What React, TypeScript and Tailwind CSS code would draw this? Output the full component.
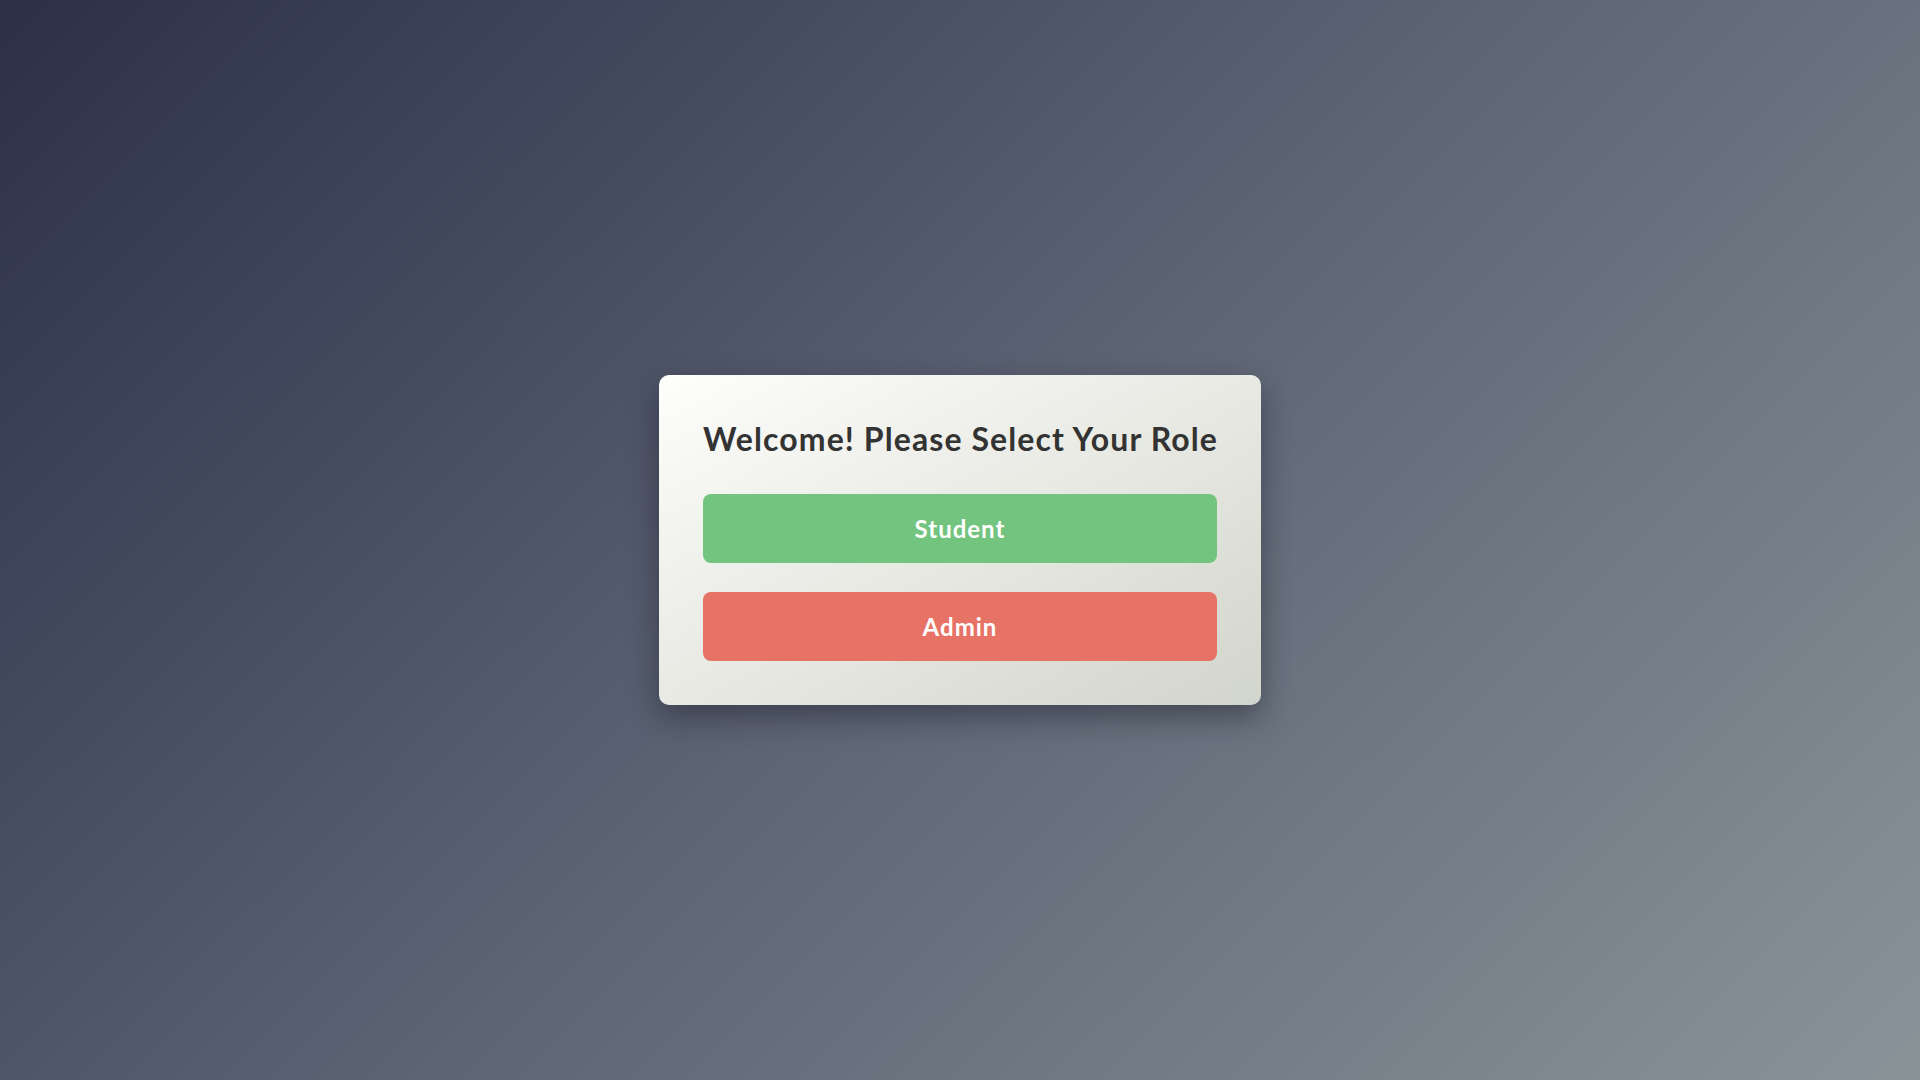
export default function App() {
  return (
    <div className="min-h-screen w-full flex items-center justify-center bg-[linear-gradient(135deg,#2b3048_0%,#5d6474_50%,#899499_100%)] font-['Lato','Open_Sans',sans-serif]">
      <div className="w-[602px] rounded-[10px] px-[44px] pt-[44px] pb-[44px] bg-gradient-to-br from-[#fefefc] to-[#d2d5cb] shadow-[0_12px_30px_rgba(20,24,36,0.45)] flex flex-col">
        <h1 className="h-[40px] leading-[40px] text-[32px] font-bold tracking-[1.1px] text-[#333333] text-center whitespace-nowrap mb-[35px]">
          Welcome! Please Select Your Role
        </h1>
        <button className="h-[69px] w-full rounded-[8px] bg-[#72c47f] text-white text-[24px] font-bold tracking-[1px] mb-[29px]">
          Student
        </button>
        <button className="h-[69px] w-full rounded-[8px] bg-[#e67365] text-white text-[24px] font-bold tracking-[1px]">
          Admin
        </button>
      </div>
    </div>
  );
}
